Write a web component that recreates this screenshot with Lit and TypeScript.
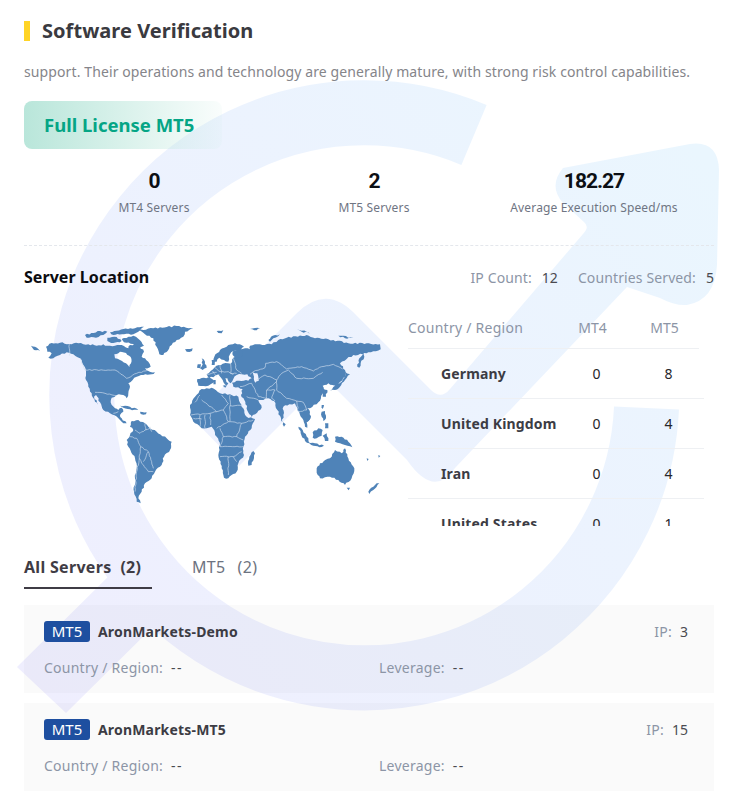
import { LitElement, html, css, svg } from "lit";
import { customElement } from "lit/decorators.js";

const LANDS: string[] = [
  // Greenland
  "355,45 400,40 440,36 470,33 520,40 495,50 490,65 470,75 455,90 430,120 418,118 410,95 400,70 375,58",
  // North America with Hudson Bay cut out
  "78,95 95,84 120,83 148,87 175,85 205,88 230,92 250,88 262,92 285,92 305,90 325,100 330,90 345,88 360,95 372,110 365,125 375,130 385,140 392,155 375,160 385,168 405,172 395,178 370,180 350,185 338,195 325,205 330,215 325,235 320,250 310,240 290,240 275,248 272,262 285,280 295,285 305,278 310,290 300,300 305,310 320,325 310,325 295,310 270,295 250,285 240,262 228,240 222,245 235,270 225,260 215,235 205,215 198,195 198,170 190,150 180,130 160,118 140,112 120,120 100,130 85,128 95,115 82,110|283,118 300,110 318,114 332,126 333,145 328,156 318,145 300,135 285,130",
  "33,92 45,95 60,108 48,106 38,100",
  // Arctic islands
  "195,60 240,48 262,50 250,60 228,68 200,68",
  "270,52 310,42 345,40 372,35 355,50 340,58 305,58 280,60",
  "262,68 290,66 305,78 280,84 262,78",
  "305,72 340,62 360,76 372,92 358,98 332,86 312,82",
  // South America
  "335,318 355,315 375,325 390,340 410,350 440,370 455,380 450,405 432,425 425,450 405,470 395,490 375,505 365,530 355,550 362,565 350,560 342,530 345,490 350,460 345,430 325,395 320,375 330,360 340,345 330,335",
  "300,272 330,275 355,285 330,283 310,278",
  "360,290 380,292 378,298 362,297",
  // Africa
  "545,222 575,218 600,235 630,238 655,245 665,275 680,305 705,312 695,340 675,365 670,395 672,420 655,445 650,470 625,490 612,488 605,460 595,420 600,390 590,365 575,335 545,340 525,325 510,300 510,270 525,245",
  "700,408 705,415 695,450 685,452 688,425",
  // Iberia
  "532,192 565,187 585,200 565,212 535,212",
  // Eurasia with the Caspian cut out
  "568,190 560,178 572,168 583,158 597,150 608,146 632,146 640,128 655,118 652,105 675,100 690,103 690,92 720,88 755,88 775,75 800,68 860,60 885,70 910,72 940,75 985,85 1040,85 1080,88 1082,103 1045,112 1028,118 1000,120 980,132 960,145 975,165 975,185 950,215 925,205 908,212 912,232 895,262 870,280 845,282 862,305 870,312 860,322 842,285 825,265 808,268 790,275 790,300 787,322 772,285 762,258 745,250 730,255 715,255 725,278 695,306 688,298 673,255 663,240 668,222 640,215 636,203 650,197 685,197 695,190 682,178 665,178 650,180 640,192 632,205 622,190 612,195 598,178 585,182|698,172 712,175 716,198 706,203 702,185",
  // Scandinavia, Finland and Europe's smaller pieces
  "583,125 600,105 625,90 645,85 672,95 655,105 640,108 630,118 625,140 612,135 598,128 590,140 580,140",
  "640,108 665,100 668,122 648,130 638,120",
  "575,135 585,135 584,150 575,150",
  "595,178 605,178 625,205 620,212 608,195",
  "580,195 587,195 587,208 580,208",
  "608,212 620,212 616,218",
  "545,130 555,140 560,158 548,165 540,160 548,148",
  "533,148 543,148 541,160 531,158",
  "495,103 518,100 516,108 500,110",
  "590,48 610,46 605,55 595,54",
  "745,75 758,62 780,58 760,70 750,80",
  "830,43 860,50 870,55 845,50",
  "955,62 1000,68 975,70",
  "690,42 720,40 710,46",
  // East Asia and the islands
  "825,265 850,262 868,285 872,310 860,322 862,338 855,335 850,315 840,300 832,285",
  "905,220 922,225 918,245 908,245",
  "905,270 912,270 908,282",
  "1012,155 1018,130 1030,115 1033,125 1022,145 1018,158",
  "975,170 990,178 975,195 960,215 945,225 930,228 945,212 965,200 975,185",
  "790,322 797,328 792,335 788,328",
  "905,290 915,288 918,310 910,318 905,305",
  "915,325 925,325 925,340 915,340",
  "835,335 848,345 865,370 868,385 855,378 842,355",
  "865,382 885,385 912,392 905,396 880,392",
  "878,352 895,340 908,345 905,362 890,370 878,368",
  "908,362 920,355 925,378 915,378",
  "945,365 965,365 985,380 997,397 975,390 960,385 945,380",
  "1040,430 1046,432 1042,438",
  "1075,420 1081,423 1076,428",
  // Oceania
  "890,460 900,445 930,430 945,405 965,415 975,400 985,430 1003,460 995,490 975,510 955,495 930,485 900,490 893,480",
  "980,518 990,518 986,526",
  "1070,505 1078,505 1060,525 1048,537 1045,530",
];

const BORDERS: string[] = [
  // North America
  "148,87 148,122",
  "180,130 195,165 285,165 320,190 350,175 385,165",
  "225,232 255,235 290,242",
  "280,295 295,290",
  // South America
  "345,345 360,355 375,345 390,340",
  "330,365 350,370 362,395 385,410 395,440 400,460",
  "362,395 358,430 365,445 385,470 400,470",
  "358,430 350,470 345,530",
  "385,410 370,440",
  "375,325 378,345",
  "390,335 395,350",
  // Africa
  "540,240 525,262",
  "545,255 590,290 610,285 625,265 605,240",
  "630,240 630,320",
  "630,272 668,272",
  "512,300 570,295 572,330",
  "590,290 570,295",
  "610,285 625,320 590,340",
  "625,320 665,325 700,315",
  "665,325 650,365",
  "600,340 610,365 600,395 645,395 670,395",
  "610,365 650,365 670,375",
  "600,425 640,425 650,440",
  "625,425 625,480",
  "640,425 665,410",
  "540,300 540,335",
  "555,300 555,340",
  "520,310 545,312",
  // Eurasia
  "640,130 650,165 665,175",
  "690,178 700,170 735,158 737,145 770,140 800,162 845,155 880,168 905,155 940,148 968,162",
  "805,165 830,190 880,190 908,172",
  "710,195 735,180 770,195 785,175 805,165",
  "770,195 770,225 800,250 830,258 850,262",
  "695,205 715,245 740,250 740,225 770,200",
  "740,225 765,225 755,250 765,258",
  "695,205 660,215",
  "680,245 715,255",
  "830,258 835,290 860,285 850,262",
  "560,178 590,172",
  "578,168 590,185",
  "600,150 605,175",
  "632,146 632,175 650,175",
  "585,158 600,170 625,170 640,178",
];

/** Breaks long straight edges into short, slightly uneven steps, so coasts read as coasts. */
function rough(ring: string, closed: boolean): string {
  const pts = ring.split(" ").map((p) => p.split(",").map(Number));
  let seed = pts.length * 7 + 3;
  const out: string[] = [];
  const last = closed ? pts.length : pts.length - 1;
  for (let i = 0; i < last; i++) {
    const [x0, y0] = pts[i];
    const [x1, y1] = pts[(i + 1) % pts.length];
    const len = Math.hypot(x1 - x0, y1 - y0);
    const steps = Math.max(1, Math.round(len / 7));
    out.push(`${x0},${y0}`);
    for (let s = 1; s < steps; s++) {
      seed = (seed * 37 + 11) % 101;
      const j = ((seed % 5) - 2) * (closed ? 1 : 0.6);
      const t = s / steps;
      out.push(`${(x0 + (x1 - x0) * t - ((y1 - y0) / len) * j).toFixed(1)},${(y0 + (y1 - y0) * t + ((x1 - x0) / len) * j).toFixed(1)}`);
    }
  }
  if (!closed) out.push(pts[pts.length - 1].join(","));
  return out.join(" ");
}

const LAND_PATHS = LANDS.map((l) =>
  l.split("|").map((ring) => `M${rough(ring, true)}Z`).join(" ")
);
const BORDER_LINES = BORDERS.map((b) => rough(b, false));

@customElement("world-map")
export class WorldMap extends LitElement {
  static styles = css`
    :host { display: block; width: 376px; height: 220px; flex: none; }
    svg { display: block; filter: blur(0.25px); }
    .land { fill: #4f83b8; fill-rule: evenodd; }
    .border { fill: none; stroke: #d3e0ef; stroke-width: 1.9; stroke-linejoin: round; }
  `;
  render() {
    return html`<svg width="376" height="220" viewBox="12 0 1128 660" aria-hidden="true">
      ${LAND_PATHS.map((d) => svg`<path class="land" d=${d}></path>`)}
      ${BORDER_LINES.map((p) => svg`<polyline class="border" points=${p}></polyline>`)}
    </svg>`;
  }
}

const COUNTRIES = [
  ["Germany", "0", "8"],
  ["United Kingdom", "0", "4"],
  ["Iran", "0", "4"],
  ["United States", "0", "1"],
];

const SERVERS = [
  ["AronMarkets-Demo", "3"],
  ["AronMarkets-MT5", "15"],
];

@customElement("app-root")
export class AppRoot extends LitElement {
  static styles = css`
    :host {
      display: block;
      position: relative;
      min-height: 812px;
      background: #fff;
      overflow: hidden;
      font-family: "Noto Sans", "Open Sans", sans-serif;
      color: #3c3c42;
    }
    .wm { position: absolute; left: 0; top: 0; }
    .page { position: relative; padding: 21px 22px 21px 24px; }
    .title { display: flex; align-items: center; height: 20px; font-size: 20px; font-weight: 700; line-height: 20px; color: #3a3a40; letter-spacing: 0.05px; }
    .title i { width: 6px; height: 20px; background: #ffd426; margin-right: 12px; }
    .intro { margin: 20px 0 0; font-size: 14px; line-height: 22px; color: #85858a; white-space: nowrap; letter-spacing: 0.11px; }
    .badge {
      margin-top: 18px; width: 198px; height: 48px; box-sizing: border-box; padding: 0 0 2px 20px;
      display: flex; align-items: center; border-radius: 8px;
      background: linear-gradient(90deg, #b9e6da 0%, rgba(185, 230, 218, 0.08) 100%);
      font-size: 18.5px; font-weight: 700; color: #05a585;
    }
    .stats { display: grid; grid-template-columns: repeat(3, 220px); margin: 20px 0 0 20px; text-align: center; }
    .stats b { display: block; font: 700 21px/24px Roboto, sans-serif; color: #0c0f14; letter-spacing: -1px; }
    .stats span { display: block; margin-top: 6px; font-size: 12px; line-height: 18px; color: #6f7583; letter-spacing: 0.15px; }
    .rule { margin-top: 28px; border-top: 1px dashed #e4e7ec; }
    .loc { display: flex; justify-content: space-between; align-items: center; margin-top: 20px; height: 22px; }
    .loc h3 { margin: 0; font-size: 16px; font-weight: 700; color: #0c0c10; letter-spacing: 0.05px; }
    .counts { display: flex; gap: 20px; font-size: 14px; }
    .lbl { color: #8c95a6; letter-spacing: 0.12px; }
    .val { color: #4a4a50; margin-left: 10px; }
    .geo { display: flex; gap: 8px; margin-top: 20px; height: 218px; }
    world-map { margin-top: 7px; }
    .table { width: 296px; height: 218px; overflow: hidden; font-size: 14px; }
    .head, .row { display: grid; grid-template-columns: 150px 71px 71px; align-items: center; }
    .head { height: 41px; width: 291px; border-bottom: 1px solid #eef0f3; color: #8c95a6; padding-bottom: 2px; box-sizing: border-box; }
    .head span:first-child { letter-spacing: 0.25px; white-space: nowrap; }
    .head span:nth-child(n + 2) { text-align: center; }
    .head span:nth-child(2) { padding-right: 2px; }
    .row { height: 49px; border-bottom: 1px solid #eef0f3; color: #26262a; }
    .row b { padding-left: 33px; font-weight: 700; color: #3c3c44; white-space: nowrap; letter-spacing: 0.15px; }
    .row span { text-align: center; }
    .row span:nth-child(2) { padding-left: 6px; }
    .row span:nth-child(3) { padding-left: 8px; }
    .tabs { display: flex; gap: 40px; margin-top: 30px; font-size: 16px; line-height: 22px; }
    .tab { padding-bottom: 9px; white-space: pre; color: #6d7380; letter-spacing: 0.3px; word-spacing: 1.6px; }
    .tab.on { width: 128px; font-weight: 700; color: #3f3c45; border-bottom: 2px solid #3f3c45; word-spacing: 0; }
    .cards { display: flex; flex-direction: column; gap: 10px; margin-top: 16px; }
    .card { height: 88px; box-sizing: border-box; padding: 16px 26px 0 20px; background: rgba(0, 0, 0, 0.02); font-size: 14px; }
    .card .lbl { letter-spacing: 0.25px; }
    .top { display: flex; align-items: center; height: 21px; }
    .tag { width: 46px; height: 21px; border-radius: 3px; background: #1e4fa0; color: #fff; text-align: center; line-height: 21px; font-size: 15px; }
    .name { margin-left: 8px; font-weight: 700; color: #3c3c44; letter-spacing: 0.18px; }
    .ip { margin-left: auto; }
    .card .val { margin-left: 8px; }
    .bottom .val { letter-spacing: 1.5px; }
    .bottom { display: flex; margin-top: 15px; line-height: 22px; }
    .bottom > div { flex: none; width: 335px; }
  `;

  render() {
    return html`
      <svg class="wm" width="736" height="812" viewBox="0 0 736 812" aria-hidden="true">
        <defs>
          <linearGradient id="wmg" gradientUnits="userSpaceOnUse" x1="40" y1="700" x2="700" y2="150">
            <stop offset="0" stop-color="#efeefe"></stop>
            <stop offset="1" stop-color="#eaf6fe"></stop>
          </linearGradient>
        </defs>
        <path d="M474 135 A282.5 282.5 0 1 0 646.5 408" fill="none" stroke="url(#wmg)" stroke-width="65"></path>
        <path fill="url(#wmg)" d="M17 667 L66 713 L170 610 L125 560 Z"></path>
        <path fill="url(#wmg)" d="M192 418 L297 313 Q327 283 357 316 L431 390 Q441 400 450 389 L583 234 Q590 227 584 222 L563 203 Q548 186 563 168 L690 144 Q718 140 719 170 L717 265 Q715 300 687 305 Q675 306 660 298 L627 287 L455 468 Q434 499 407 460 L326 379 L239 466 Z"></path>
      </svg>
      <div class="page">
        <div class="title"><i></i>Software Verification</div>
        <p class="intro">support. Their operations and technology are generally mature, with strong risk control capabilities.</p>
        <div class="badge">Full License MT5</div>
        <div class="stats">
          <div><b>0</b><span>MT4 Servers</span></div>
          <div><b>2</b><span>MT5 Servers</span></div>
          <div><b>182.27</b><span>Average Execution Speed/ms</span></div>
        </div>
        <div class="rule"></div>
        <div class="loc">
          <h3>Server Location</h3>
          <div class="counts">
            <div><span class="lbl">IP Count:</span><span class="val">12</span></div>
            <div><span class="lbl">Countries Served:</span><span class="val">5</span></div>
          </div>
        </div>
        <div class="geo">
          <world-map></world-map>
          <div class="table">
            <div class="head"><span>Country / Region</span><span>MT4</span><span>MT5</span></div>
            ${COUNTRIES.map(
              ([c, a, b]) => html`<div class="row"><b>${c}</b><span>${a}</span><span>${b}</span></div>`
            )}
          </div>
        </div>
        <div class="tabs">
          <div class="tab on">All Servers  (2)</div>
          <div class="tab">MT5  (2)</div>
        </div>
        <div class="cards">
          ${SERVERS.map(
            ([n, ip]) => html`<div class="card">
              <div class="top">
                <span class="tag">MT5</span><span class="name">${n}</span>
                <span class="ip"><span class="lbl">IP:</span><span class="val">${ip}</span></span>
              </div>
              <div class="bottom">
                <div><span class="lbl">Country / Region:</span><span class="val">--</span></div>
                <div><span class="lbl">Leverage:</span><span class="val">--</span></div>
              </div>
            </div>`
          )}
        </div>
      </div>
    `;
  }
}
